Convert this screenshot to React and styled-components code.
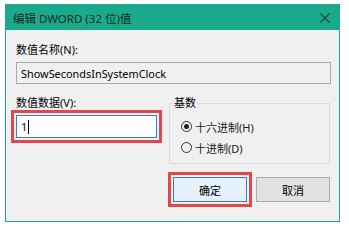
import React from "react";
import styled, { createGlobalStyle } from "styled-components";

const GlobalStyle = createGlobalStyle`
    body {
        margin: 0;
        background: #ffffff;
        font-family: "Noto Sans", "Noto Sans CJK SC", sans-serif;
        font-size: 11px;
        color: #000;
    }
`

const Window = styled.div`
    margin: 4px 0 0 5px;
    width: 335px;
    height: 218px;
    box-sizing: border-box;
    border: 1px solid #1aaa8b;
    background: #f0f0f0;
    display: flex;
    flex-direction: column;
`

const TitleBar = styled.div`
    height: 25px;
    background: #1aaa8b;
    display: flex;
    align-items: center;
    justify-content: space-between;
    padding: 0 9px 0 7px;
`

const Title = styled.div`
    font-size: 11.5px;
    color: #0f2b23;
`

const Body = styled.div`
    padding: 12px 8px 0 10px;
    display: flex;
    flex-direction: column;
`

const Label = styled.div`
    line-height: 16px;
    height: 16px;
`

const TextBox = styled.div`
    margin-top: ${p => p.gap || 0}px;
    height: ${p => p.h}px;
    box-sizing: border-box;
    border: 1px solid ${p => p.focused ? "#2f7fd2" : "#a9a9a9"};
    background: ${p => p.focused ? "#ffffff" : "#f0f0f0"};
    padding-left: 4px;
    display: flex;
    align-items: center;
    font-size: 10.9px;
    white-space: nowrap;
`

const Caret = styled.span`
    display: inline-block;
    width: 1px;
    height: 14px;
    background: #000;
    margin-left: 1px;
`

const Row = styled.div`
    margin-top: 11px;
    display: flex;
    gap: 12px;
`

const Column = styled.div`
    width: 141px;
    display: flex;
    flex-direction: column;
`

/* 紅框標註 */
const Marked = styled.div`
    margin-top: ${p => p.gap || 0}px;
    outline: 3px solid #e2474b;
    outline-offset: 2px;
`

const Group = styled.fieldset`
    flex: 1;
    margin: 0 1px 0 0;
    padding: 5px 0 5px 11px;
    border: 1px solid #dcdcdc;
    min-width: 0;
`

const Legend = styled.legend`
    padding: 0 1px;
    margin-left: -8px;
    line-height: 16px;
`

const RadioRow = styled.div`
    height: 21px;
    display: flex;
    align-items: center;
    gap: 3px;
    color: #1a1a1a;
`

const RadioDot = styled.span`
    width: 11px;
    height: 11px;
    box-sizing: border-box;
    border-radius: 50%;
    border: 1px solid #333;
    display: flex;
    align-items: center;
    justify-content: center;

    &::after {
        content: "";
        width: 5px;
        height: 5px;
        border-radius: 50%;
        background: ${p => p.checked ? "#222" : "transparent"};
    }
`

const Buttons = styled.div`
    margin-top: 13px;
    display: flex;
    justify-content: flex-end;
    gap: 9px;
    padding-right: 1px;
`

const Button = styled.div`
    width: 74px;
    height: 25px;
    box-sizing: border-box;
    border: 1px solid ${p => p.primary ? "#2f7fd2" : "#adadad"};
    background: ${p => p.primary ? "#e5f1fb" : "#e1e1e1"};
    display: flex;
    align-items: center;
    justify-content: center;
`

const CloseIcon = () => (
    <svg width="10" height="10" viewBox="0 0 10 10">
        <path d="M0.5 0.5 L9.5 9.5 M9.5 0.5 L0.5 9.5" stroke="#1d4a40" strokeWidth="1.3" />
    </svg>
)

const App = () => {
    return (
        <>
            <GlobalStyle />
            <Window>
                <TitleBar>
                    <Title>编辑 DWORD (32 位)值</Title>
                    <CloseIcon />
                </TitleBar>
                <Body>
                    <Label>数值名称(N):</Label>
                    <TextBox h={22} gap={4}>ShowSecondsInSystemClock</TextBox>
                    <Row>
                        <Column>
                            <Label>数值数据(V):</Label>
                            <Marked gap={4}>
                                <TextBox h={23} focused>1<Caret /></TextBox>
                            </Marked>
                        </Column>
                        <Group>
                            <Legend>基数</Legend>
                            <RadioRow><RadioDot checked />十六进制(H)</RadioRow>
                            <RadioRow><RadioDot />十进制(D)</RadioRow>
                        </Group>
                    </Row>
                    <Buttons>
                        <Marked><Button primary>确定</Button></Marked>
                        <Button>取消</Button>
                    </Buttons>
                </Body>
            </Window>
        </>
    );
}

export default App;
